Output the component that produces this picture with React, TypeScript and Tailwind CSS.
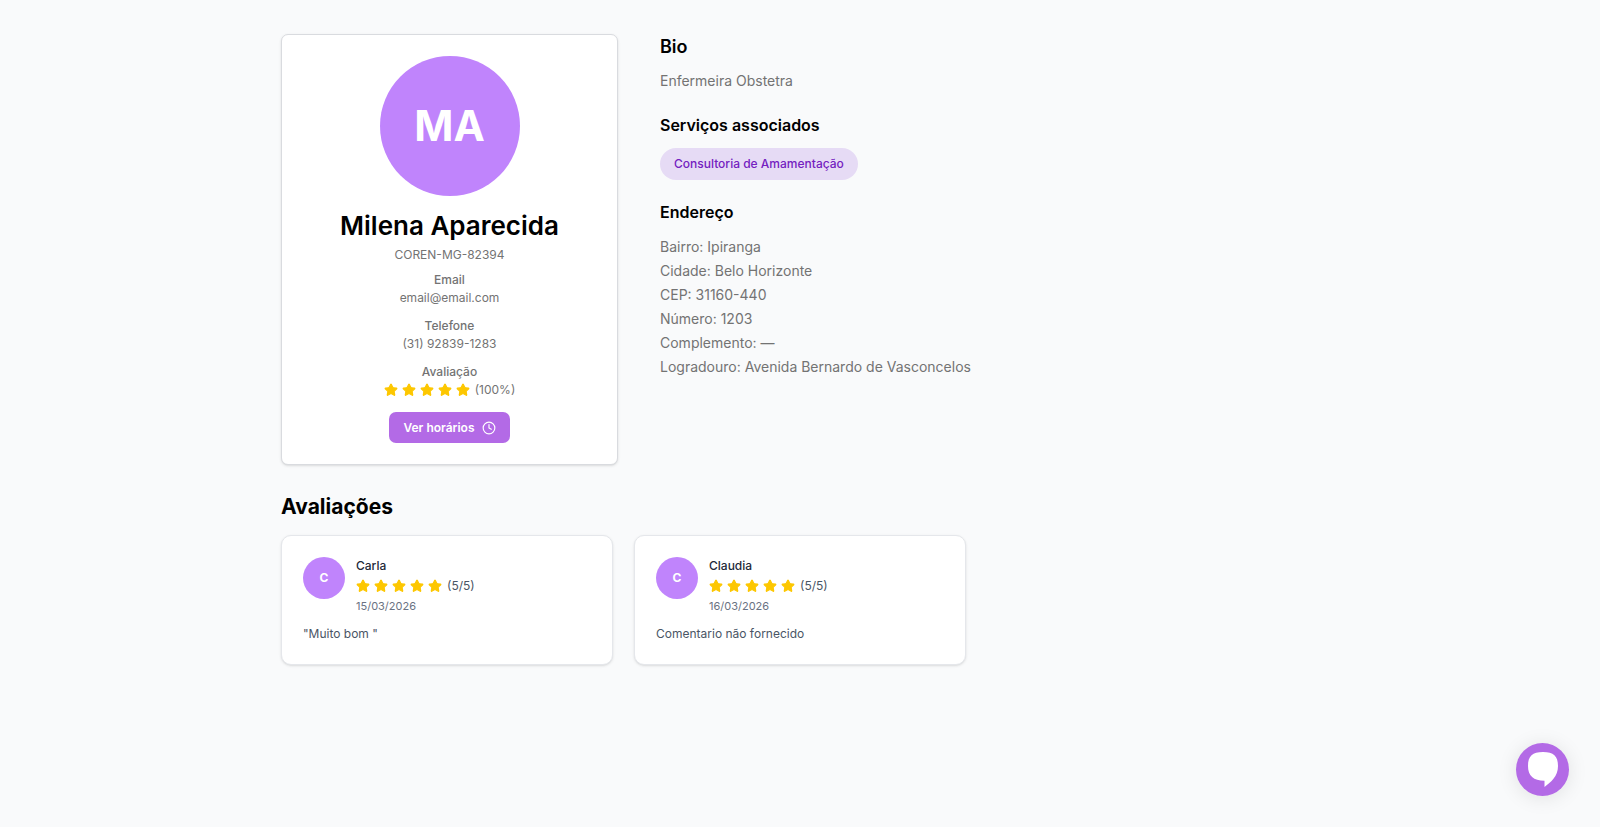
import { Clock, Star } from "lucide-react";

const reviews = [
  { name: "Carla", date: "15/03/2026", comment: '"Muito bom "' },
  { name: "Claudia", date: "16/03/2026", comment: "Comentario não fornecido" },
];

const contacts = [
  { label: "Email", value: "email@email.com" },
  { label: "Telefone", value: "(31) 92839-1283" },
];

const address = [
  "Bairro: Ipiranga",
  "Cidade: Belo Horizonte",
  "CEP: 31160-440",
  "Número: 1203",
  "Complemento: —",
  "Logradouro: Avenida Bernardo de Vasconcelos",
];

function Stars({ label }: { label: string }) {
  return (
    <div className="flex items-center gap-[5px]">
      <div className="flex gap-1" aria-hidden="true">
        {[1, 2, 3, 4, 5].map((n) => (
          <Star key={n} className="size-[14px] fill-[#fdc700] text-[#fdc700]" />
        ))}
      </div>
      <span>{label}</span>
    </div>
  );
}

export default function App() {
  return (
    <div className="min-h-screen bg-[#f9fafb] px-6 pt-[34px] pb-16 font-['Inter',sans-serif] text-black">
      <main className="mx-auto max-w-[1038px]">
        <div className="flex flex-wrap items-start gap-[42px]">
          <section className="flex w-full max-w-[337px] flex-col items-center rounded-[7px] border border-[#d9dbdf] bg-white p-[21px] text-[12px] leading-[18px] text-[#737373] shadow-sm">
            <div className="flex size-[140px] items-center justify-center rounded-full bg-[#c084fc] text-[42px] leading-none font-bold text-white">
              MA
            </div>
            <h1 className="mt-[14px] text-[26px] leading-8 font-semibold text-black">Milena Aparecida</h1>
            <p className="mt-1">COREN-MG-82394</p>
            <div className="mt-[7px] flex flex-col items-center gap-[10px]">
              {contacts.map((c) => (
                <div key={c.label} className="text-center">
                  <p className="font-medium">{c.label}</p>
                  <p>{c.value}</p>
                </div>
              ))}
              <div className="flex flex-col items-center">
                <p className="font-medium">Avaliação</p>
                <Stars label="(100%)" />
              </div>
            </div>
            <button
              type="button"
              className="mt-[13px] flex h-[31px] items-center gap-[7px] rounded-[7px] bg-[#b36ae6] px-[14px] font-semibold text-white"
            >
              Ver horários
              <Clock className="size-[14px]" />
            </button>
          </section>

          <section className="flex-1 pt-px text-[14px] text-[#737373]">
            <h2 className="text-[18px] leading-6 font-semibold text-black">Bio</h2>
            <p className="mt-[10px] leading-6">Enfermeira Obstetra</p>
            <h3 className="mt-5 text-[16px] leading-6 font-semibold text-black">Serviços associados</h3>
            <ul className="mt-[11px] flex flex-wrap gap-2">
              <li className="rounded-full bg-[#e6dbf5] px-[14px] py-[7px] text-[12px] leading-[18px] font-medium text-[#7421c0]">
                Consultoria de Amamentação
              </li>
            </ul>
            <h3 className="mt-5 text-[16px] leading-6 font-semibold text-black">Endereço</h3>
            <ul className="mt-[11px]">
              {address.map((line) => (
                <li key={line} className="leading-6">{line}</li>
              ))}
            </ul>
          </section>
        </div>

        <section className="mt-7">
          <h2 className="text-[21px] leading-7 font-bold">Avaliações</h2>
          <div className="mt-[14px] grid gap-[21px] sm:grid-cols-2 lg:grid-cols-3">
            {reviews.map((r) => (
              <article key={r.name} className="rounded-[10px] border border-gray-200 bg-white p-[21px] text-[12px] leading-[18px] text-[#4a5565] shadow-sm">
                <div className="flex items-start gap-[11px]">
                  <div className="flex size-[42px] items-center justify-center rounded-full bg-[#c084fc] font-bold text-white">
                    C
                  </div>
                  <div className="flex flex-col gap-[2px]">
                    <h3 className="font-medium text-[#1e2939]">{r.name}</h3>
                    <Stars label="(5/5)" />
                    <p className="text-[11px] text-[#6a7282]">{r.date}</p>
                  </div>
                </div>
                <p className="mt-[10px]">{r.comment}</p>
              </article>
            ))}
          </div>
        </section>
      </main>

      <button
        type="button"
        aria-label="Abrir chat"
        className="fixed right-[31px] bottom-[31px] flex size-[53px] items-center justify-center rounded-full bg-[#b36ae6] shadow-[0_2px_20px_rgba(0,0,0,0.1)]"
      >
        <svg viewBox="0 0 30 35" className="h-[35px] w-[30px] fill-white" aria-hidden="true">
          <path d="M15 0C4.500 0 0 4 0 14c0 10 5.500 14.700 16.500 14.700V35C23 30 30 24.500 30 14 30 4 25.500 0 15 0z" />
        </svg>
      </button>
    </div>
  );
}
